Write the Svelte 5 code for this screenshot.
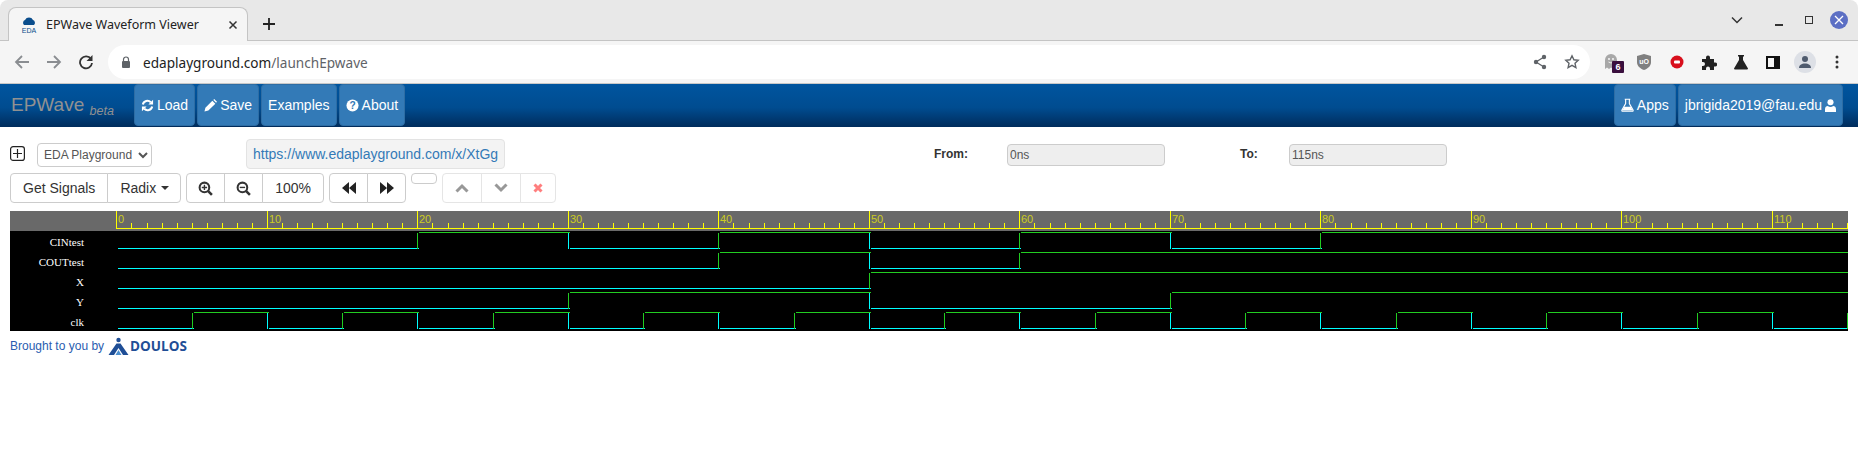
<script>
    // 15.05px per ns, t=0 sits at x=116.4
    const x0 = 116.4;
    const scale = 15.05;
    const endTime = 115;
    const xAt = t => Math.round(x0 + t * scale);

    const clkEdges = [];
    for (let t = 5; t <= 115; t += 5) clkEdges.push(t);

    const signals = [
        { name: 'CINtest', edges: [20, 30, 40, 50, 60, 70, 80] },
        { name: 'COUTtest', edges: [40, 50, 60] },
        { name: 'X', edges: [50] },
        { name: 'Y', edges: [30, 50, 70] },
        { name: 'clk', edges: clkEdges }
    ];

    const segments = (edges) => {
        const out = [];
        let from = 0;
        let level = 0;
        for (const t of [...edges, endTime]) {
            if (t > from) out.push({ from, to: t, level });
            from = t;
            level = 1 - level;
        }
        return out;
    };

    const ticks = [];
    for (let t = 0; t <= endTime; t++) ticks.push(t);
</script>

<div class="chrome">
    <div class="tabstrip">
        <div class="tab">
            <svg class="favicon" viewBox="0 0 18 18" width="18" height="18">
                <path d="M4 9 a3 3 0 0 1 1-5 a4.500 4.500 0 0 1 8 0 a3 3 0 0 1 1 5z" fill="#0a4d8c" />
                <text x="9" y="17" text-anchor="middle" class="favtext">EDA</text>
            </svg>
            <span class="tab-title">EPWave Waveform Viewer</span>
            <svg class="tab-close" viewBox="0 0 10 10" width="10" height="10">
                <path d="M1.500 1.500l7 7M8.500 1.500l-7 7" stroke="#333" stroke-width="1.500" />
            </svg>
        </div>
        <svg class="newtab" viewBox="0 0 14 14" width="14" height="14">
            <path d="M7 1v12M1 7h12" stroke="#222" stroke-width="1.800" />
        </svg>
        <div class="spacer"></div>
        <svg class="win chev" viewBox="0 0 12 8" width="12" height="8">
            <path d="M1 1.500l5 5 5-5" fill="none" stroke="#333" stroke-width="1.500" />
        </svg>
        <div class="win minimize"></div>
        <div class="win maximize"></div>
        <div class="win closebtn">
            <svg viewBox="0 0 10 10" width="10" height="10">
                <path d="M1 1l8 8M9 1l-8 8" stroke="#fff" stroke-width="1.300" />
            </svg>
        </div>
    </div>
    <div class="toolbar">
        <svg class="tool" viewBox="0 0 16 16" width="16" height="16">
            <path d="M15 8H2M8 2L2 8l6 6" fill="none" stroke="#8a8d91" stroke-width="1.800" />
        </svg>
        <svg class="tool fwd" viewBox="0 0 16 16" width="16" height="16">
            <path d="M1 8h13M8 2l6 6-6 6" fill="none" stroke="#8a8d91" stroke-width="1.800" />
        </svg>
        <svg class="tool reload" viewBox="0 0 16 16" width="16" height="16">
            <path d="M13 5a6 6 0 1 0 1 4" fill="none" stroke="#333" stroke-width="1.800" />
            <path d="M14.500 1v6h-6z" fill="#333" />
        </svg>
        <div class="omnibox">
            <svg class="lock" viewBox="0 0 10 13" width="10" height="13">
                <path d="M2.500 5V3.500a2.500 2.500 0 0 1 5 0V5" fill="none" stroke="#5f6368" stroke-width="1.200" />
                <rect x="1" y="5" width="8" height="7" rx="1" fill="#5f6368" />
            </svg>
            <span class="host">edaplayground.com</span><span class="path">/launchEpwave</span>
            <div class="spacer"></div>
            <svg class="share" viewBox="0 0 14 16" width="14" height="16">
                <path d="M11 3L3 8l8 5" fill="none" stroke="#5f6368" stroke-width="1.300" />
                <circle cx="11" cy="3" r="2.200" fill="#5f6368" />
                <circle cx="3" cy="8" r="2.200" fill="#5f6368" />
                <circle cx="11" cy="13" r="2.200" fill="#5f6368" />
            </svg>
            <svg class="star" viewBox="0 0 16 16" width="16" height="16">
                <path d="M8 1.800l1.900 4 4.300.5-3.200 3 .9 4.300L8 11.400l-3.900 2.200.9-4.300-3.200-3 4.300-.5z" fill="none" stroke="#5f6368" stroke-width="1.400" />
            </svg>
        </div>
        <div class="ghost">
            <svg viewBox="0 0 14 18" width="14" height="18">
                <path d="M1 16V7a6 6 0 0 1 12 0v9l-2-1.500-2 1.500-2-1.500-2 1.500-2-1.500z" fill="#a8a8a8" />
                <circle cx="5" cy="6" r=".9" fill="#fff" />
                <circle cx="9" cy="6" r=".9" fill="#fff" />
                <path d="M4.500 9q2.500 2 5 0" fill="none" stroke="#fff" stroke-width=".8" />
            </svg>
            <span class="badge">6</span>
        </div>
        <svg class="ext ublock" viewBox="0 0 16 18" width="16" height="18">
            <path d="M8 1l7 2v6c0 4-3 6.500-7 8-4-1.500-7-4-7-8V3z" fill="#808080" />
            <text x="8" y="11" text-anchor="middle" class="ubtext">uO</text>
        </svg>
        <svg class="ext stop" viewBox="0 0 14 14" width="14" height="14">
            <circle cx="7" cy="7" r="6.500" fill="#d80f1c" />
            <rect x="4" y="5.500" width="6" height="3" rx="1" fill="#fff" />
        </svg>
        <svg class="ext puzzle" viewBox="0 0 16 16" width="16" height="16">
            <path d="M1 5h4V3.500a2 2 0 0 1 4 0V5h4v3.500h1.200a2 2 0 0 1 0 4H13V16H9v-1.500a2 2 0 0 0-4 0V16H1v-4h1a2 2 0 0 0 0-4H1z" fill="#222" />
        </svg>
        <svg class="ext flask" viewBox="0 0 16 16" width="16" height="16">
            <path d="M5 1h6v1.500h-1V6l5 8.500a1 1 0 0 1-1 1H2a1 1 0 0 1-1-1L6 6V2.500H5z" fill="#222" />
        </svg>
        <div class="ext panel"></div>
        <div class="avatar">
            <svg viewBox="0 0 14 12" width="14" height="12">
                <circle cx="7" cy="3" r="3" fill="#4f5b6e" />
                <path d="M1 12c0-3 2.500-4.500 6-4.500S13 9 13 12z" fill="#4f5b6e" />
            </svg>
        </div>
        <svg class="dots" viewBox="0 0 4 14" width="4" height="14">
            <circle cx="2" cy="2" r="1.500" fill="#333" />
            <circle cx="2" cy="7" r="1.500" fill="#333" />
            <circle cx="2" cy="12" r="1.500" fill="#333" />
        </svg>
    </div>
</div>

<nav class="navbar">
    <span class="brand">EPWave <small>beta</small></span>
    <button class="nav-btn load">
        <svg viewBox="0 0 14 14" width="13" height="13">
            <path d="M2 6a5 5 0 0 1 8.500-2.500M12 8a5 5 0 0 1-8.500 2.500" fill="none" stroke="#fff" stroke-width="2.200" />
            <path d="M13 .8v5H8zM1 13.200v-5h5z" fill="#fff" />
        </svg>
        Load
    </button>
    <button class="nav-btn">
        <svg viewBox="0 0 14 14" width="13" height="13">
            <path d="M.5 13.500l1-4.200 7.500-7.500 3.200 3.200-7.500 7.500zM10 1l1-1 3 3-1 1z" fill="#fff" />
        </svg>
        Save
    </button>
    <button class="nav-btn">Examples</button>
    <button class="nav-btn">
        <svg viewBox="0 0 14 14" width="13" height="13">
            <circle cx="7" cy="7" r="6.500" fill="#fff" />
            <text x="7" y="11" text-anchor="middle" class="qmark">?</text>
        </svg>
        About
    </button>
    <div class="spacer"></div>
    <button class="nav-btn">
        <svg viewBox="0 0 14 14" width="13" height="14">
            <path d="M4 .8h6M5 1v4.500L1 12.500a.8.800 0 0 0 .7 1.200h10.600a.8.800 0 0 0 .7-1.200L9 5.500V1" fill="none" stroke="#fff" stroke-width="1.200" />
            <path d="M3.500 9h7l2 4H1.500z" fill="#fff" />
        </svg>
        Apps
    </button>
    <button class="nav-btn user">
        jbrigida2019@fau.edu
        <svg viewBox="0 0 12 14" width="11" height="13">
            <circle cx="6" cy="3.500" r="3.300" fill="#fff" />
            <path d="M0 14v-3c0-2.500 1.500-3.500 3-3.500q3 2 6 0c1.500 0 3 1 3 3.500v3z" fill="#fff" />
        </svg>
    </button>
</nav>

<div class="controls">
    <div class="row-one">
        <svg class="expand" viewBox="0 0 15 15" width="15" height="15">
            <rect x=".6" y=".6" width="13.800" height="13.800" rx="2.500" fill="none" stroke="#222" stroke-width="1.200" />
            <path d="M7.500 3v9M3 7.500h9" stroke="#222" stroke-width="1.200" />
        </svg>
        <select class="source">
            <option>EDA Playground</option>
        </select>
        <div class="share-url">https://www.edaplayground.com/x/XtGg</div>
        <span class="range-label from">From:</span>
        <input class="range" value="0ns" disabled />
        <span class="range-label to">To:</span>
        <input class="range" value="115ns" disabled />
    </div>
    <div class="row-two">
        <div class="group">
            <button>Get Signals</button>
            <button class="radix">Radix <span class="caret"></span></button>
        </div>
        <div class="group">
            <button class="icon-btn">
                <svg viewBox="0 0 14 14" width="15" height="15">
                    <circle cx="6" cy="6" r="4.500" fill="none" stroke="#333" stroke-width="1.900" />
                    <path d="M9.500 9.500l3.500 3.500" stroke="#333" stroke-width="2.400" />
                    <path d="M6 3.500v5M3.500 6h5" stroke="#333" stroke-width="1.300" />
                </svg>
            </button>
            <button class="icon-btn">
                <svg viewBox="0 0 14 14" width="15" height="15">
                    <circle cx="6" cy="6" r="4.500" fill="none" stroke="#333" stroke-width="1.900" />
                    <path d="M9.500 9.500l3.500 3.500" stroke="#333" stroke-width="2.400" />
                    <path d="M3.500 6h5" stroke="#333" stroke-width="1.300" />
                </svg>
            </button>
            <button class="zoom-pct">100%</button>
        </div>
        <div class="group">
            <button class="icon-btn">
                <svg viewBox="0 0 14 12" width="14" height="12">
                    <path d="M7 0v12L0 6zM14 0v12L7 6z" fill="#222" />
                </svg>
            </button>
            <button class="icon-btn">
                <svg viewBox="0 0 14 12" width="14" height="12">
                    <path d="M0 0v12l7-6zM7 0v12l7-6z" fill="#222" />
                </svg>
            </button>
        </div>
        <button class="blank"></button>
        <div class="group disabled">
            <button class="icon-btn">
                <svg viewBox="0 0 14 10" width="14" height="10">
                    <path d="M1.500 8.500L7 3l5.500 5.500" fill="none" stroke="#333" stroke-width="3" />
                </svg>
            </button>
            <button class="icon-btn">
                <svg viewBox="0 0 14 10" width="14" height="10">
                    <path d="M1.500 1.500L7 7l5.500-5.500" fill="none" stroke="#333" stroke-width="3" />
                </svg>
            </button>
            <button class="icon-btn">
                <svg viewBox="0 0 10 10" width="10" height="10">
                    <path d="M1.500 1.500l7 7M8.500 1.500l-7 7" stroke="#f00" stroke-width="3" />
                </svg>
            </button>
        </div>
    </div>
</div>

<svg class="wave" viewBox="10 211 1838 120" width="1838" height="120" shape-rendering="crispEdges">
    <rect x="10" y="211" width="1838" height="20" fill="#696969" />
    <rect x="10" y="231" width="1838" height="100" fill="#000" />

    <rect x={xAt(0)} y="228" width={1848 - xAt(0)} height="1" fill="#ff0" />
    {#each ticks as t}
        {#if t % 10 === 0}
            <rect x={xAt(t)} y="211" width="1" height="17" fill="#ff0" />
            <text class="tick-label" x={xAt(t) + 2} y="223">{t}</text>
        {:else}
            <rect x={xAt(t)} y="223" width="1" height="5" fill="#ff0" />
        {/if}
    {/each}

    {#each signals as sig, i}
        {@const top = 232 + i * 20}
        <text class="sig-label" x="84" y={top + 14}>{sig.name}</text>
        {#each segments(sig.edges) as seg}
            <rect
                x={xAt(seg.from) + 2}
                y={seg.level ? top : top + 16}
                width={xAt(seg.to) - xAt(seg.from)}
                height="1"
                fill={seg.level ? '#22cc22' : '#00ffff'} />
            {#if seg.to < endTime || sig.name === 'clk'}
                <rect x={xAt(seg.to)} y={top + 1} width="1" height="16" fill={seg.level ? '#00ffff' : '#22cc22'} />
            {/if}
        {/each}
    {/each}
</svg>

<footer class="credit">
    <span>Brought to you by</span>
    <span class="doulos">
        <svg viewBox="0 0 20 18" width="21" height="18">
            <circle cx="10" cy="3" r="2.200" fill="#1f4e96" />
            <path d="M0 18L8 6.500h4L20 18h-5.500L10 11l-4.500 7z" fill="#1f4e96" />
            <path d="M7 18l3-5 3 5z" fill="#4a8fd0" />
        </svg>
        <span class="doulos-name">DOULOS</span>
    </span>
</footer>

<style>
    :global(body) {
        font-family: "Liberation Sans", Arial, sans-serif;
        background: #fff;
        overflow: hidden;
    }

    .spacer {
        flex: 1;
    }

    /* browser chrome */
    .chrome {
        font-family: "Noto Sans", sans-serif;
        height: 84px;
    }

    .tabstrip {
        display: flex;
        align-items: center;
        height: 41px;
        box-sizing: border-box;
        background: #e8e8e8;
        border-bottom: 1px solid #c4c4c4;
        border-radius: 8px 8px 0 0;
    }

    .tab {
        display: flex;
        align-items: center;
        box-sizing: border-box;
        width: 240px;
        height: 34px;
        margin: 7px 0 -1px 8px;
        padding-left: 11px;
        background: #f5f5f5;
        border: 1px solid #c4c4c4;
        border-bottom: none;
        border-radius: 8px 8px 0 0;
    }

    .favtext {
        font: 7px "Liberation Sans", sans-serif;
        fill: #0a4d8c;
    }

    .tab-title {
        margin-left: 8px;
        font-size: 12.500px;
        color: #222;
        white-space: nowrap;
    }

    .tab-close {
        margin-left: 29px;
    }

    .newtab {
        margin: 7px 0 0 14px;
    }

    .win.chev {
        margin-right: 32px;
    }

    .win.minimize {
        width: 8px;
        height: 2px;
        margin: 9px 22px 0 0;
        background: #333;
    }

    .win.maximize {
        box-sizing: border-box;
        width: 8px;
        height: 8px;
        margin-right: 17px;
        border: 1.500px solid #333;
    }

    .win.closebtn {
        display: flex;
        align-items: center;
        justify-content: center;
        width: 18px;
        height: 18px;
        margin-right: 10px;
        border-radius: 50%;
        background: #5c6fc4;
    }

    .toolbar {
        display: flex;
        align-items: center;
        box-sizing: border-box;
        height: 43px;
        padding-left: 14px;
        background: #f5f5f5;
        border-bottom: 1px solid #c8c8c8;
    }

    .tool.fwd {
        margin-left: 16px;
    }

    .tool.reload {
        margin-left: 16px;
    }

    .omnibox {
        display: flex;
        align-items: center;
        box-sizing: border-box;
        width: 1482px;
        height: 34px;
        margin-left: 14px;
        padding-left: 13px;
        background: #fff;
        border-radius: 17px;
        font-size: 13.600px;
    }

    .lock {
        margin-right: 12px;
    }

    .host {
        color: #222;
    }

    .path {
        color: #5f6368;
    }

    .star {
        margin: 0 10px 0 17px;
    }

    .ghost {
        position: relative;
        display: flex;
        margin-left: 14px;
    }

    .badge {
        position: absolute;
        left: 8px;
        top: 8px;
        width: 12px;
        height: 12px;
        background: #3a0f3e;
        color: #fff;
        font: bold 9px/12px "Liberation Sans", sans-serif;
        text-align: center;
        border-radius: 1px;
    }

    .ext {
        margin-left: 17px;
    }

    .ublock {
        margin-left: 18px;
    }

    .ubtext {
        font: bold 7px "Liberation Sans", sans-serif;
        fill: #fff;
    }

    .stop {
        margin-left: 18px;
    }

    .puzzle {
        margin-left: 17px;
    }

    .flask {
        margin-left: 16px;
    }

    .panel {
        box-sizing: border-box;
        width: 14px;
        height: 13px;
        margin-left: 17px;
        border: 2px solid #111;
        border-right-width: 6px;
    }

    .avatar {
        display: flex;
        align-items: center;
        justify-content: center;
        width: 22px;
        height: 22px;
        margin-left: 14px;
        border-radius: 50%;
        background: #dde0e6;
    }

    .dots {
        margin-left: 19px;
    }

    /* site navbar */
    .navbar {
        display: flex;
        height: 43px;
        padding-right: 15px;
        background: linear-gradient(#00559f 0%, #004c90 55%, #002c5c 100%);
    }

    .brand {
        width: 123px;
        padding-left: 11px;
        color: #919191;
        font-size: 19px;
        line-height: 41px;
        white-space: nowrap;
    }

    .brand small {
        font-size: 12.500px;
        font-style: italic;
        vertical-align: -4px;
    }

    .nav-btn {
        display: flex;
        align-items: center;
        justify-content: center;
        gap: 3px;
        height: 42px;
        margin-right: 2px;
        padding: 0 6px;
        color: #fff;
        background: #337ab7;
        border: 1px solid #2e6da4;
        border-radius: 4px;
        font: 14px "Liberation Sans", sans-serif;
    }

    .nav-btn.user {
        margin-right: 0;
    }

    .qmark {
        font: bold 11px "Liberation Sans", sans-serif;
        fill: #337ab7;
    }

    /* waveform controls */
    .controls {
        padding: 12px 0 8px 10px;
    }

    .row-one {
        display: flex;
        align-items: center;
        height: 30px;
    }

    .expand {
        margin-top: -1px;
    }

    .source {
        box-sizing: border-box;
        width: 115px;
        height: 24px;
        margin: 2px 0 0 12px;
        padding: 0 0 0 2px;
        background: #fff;
        color: #555;
        border: 1px solid #ccc;
        border-radius: 4px;
        font: 12px "Liberation Sans", sans-serif;
    }

    .share-url {
        box-sizing: border-box;
        width: 259px;
        height: 30px;
        margin-left: 94px;
        padding-left: 6px;
        background: #f3f3f3;
        border: 1px solid #e3e3e3;
        border-radius: 4px;
        color: #337ab7;
        font-size: 14px;
        line-height: 28px;
        white-space: nowrap;
        overflow: hidden;
    }

    .range-label {
        color: #333;
        font-size: 12px;
        font-weight: bold;
    }

    .range-label.from {
        width: 73px;
        margin-left: 429px;
    }

    .range-label.to {
        width: 49px;
        margin-left: 75px;
    }

    .range {
        box-sizing: border-box;
        width: 158px;
        height: 22px;
        margin: 2px 0 0 0;
        padding: 0 2px;
        background: #eee;
        color: #555;
        border: 1px solid #ccc;
        border-radius: 4px;
        font: 12px "Liberation Sans", sans-serif;
    }

    .row-two {
        display: flex;
        align-items: flex-start;
        gap: 5px;
        margin-top: 4px;
    }

    .group {
        display: flex;
    }

    .group button {
        display: flex;
        align-items: center;
        justify-content: center;
        box-sizing: border-box;
        height: 30px;
        margin-left: -1px;
        padding: 0 12px;
        background: #fff;
        color: #333;
        border: 1px solid #ccc;
        font: 14px "Liberation Sans", sans-serif;
        white-space: pre;
    }

    .group button:first-child {
        margin-left: 0;
        border-radius: 4px 0 0 4px;
    }

    .group button:last-child {
        border-radius: 0 4px 4px 0;
    }

    .group button.radix {
        padding-right: 11px;
    }

    .group .icon-btn {
        width: 39px;
        padding: 0;
    }

    .group .zoom-pct {
        width: 62px;
        padding: 0;
    }

    .group.disabled {
        opacity: 0.5;
    }

    .group.disabled button {
        width: 40px;
    }

    .group.disabled button:last-child {
        width: 36px;
    }

    .caret {
        width: 0;
        height: 0;
        margin-left: 1px;
        border-top: 4px solid #333;
        border-left: 4px solid transparent;
        border-right: 4px solid transparent;
    }

    .blank {
        box-sizing: border-box;
        width: 26px;
        height: 11px;
        padding: 0;
        background: #fff;
        border: 1px solid #ccc;
        border-radius: 4px;
    }

    /* waveform */
    .wave {
        display: block;
        margin-left: 10px;
    }

    .tick-label {
        font: 11px "Liberation Sans", sans-serif;
        fill: #cccc22;
    }

    .sig-label {
        font: 11px "Liberation Serif", serif;
        fill: #fff;
        text-anchor: end;
    }

    /* footer */
    .credit {
        display: flex;
        align-items: center;
        gap: 4px;
        padding: 6px 0 0 10px;
        color: #2a5db0;
        font-size: 12px;
    }

    .doulos {
        display: flex;
        align-items: center;
        gap: 1px;
    }

    .doulos-name {
        color: #1f4e96;
        font: bold 13.500px "Open Sans", sans-serif;
    }
</style>
